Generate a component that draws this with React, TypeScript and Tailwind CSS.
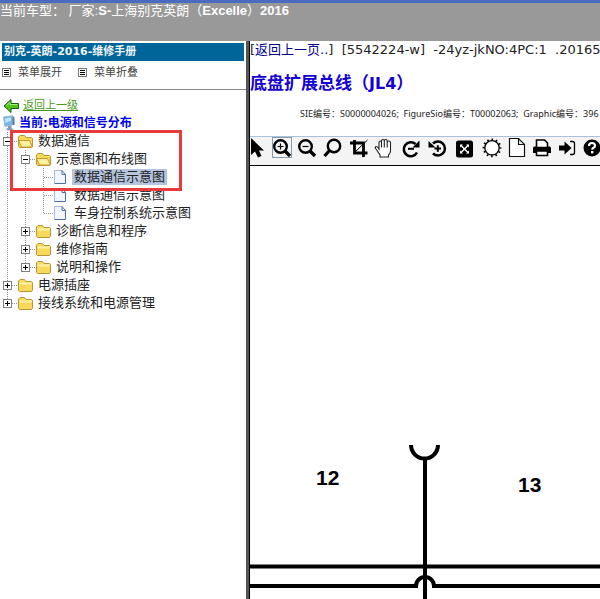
import { useState } from 'react';
import type { ReactNode } from 'react';
import clsx from 'clsx';

type Guide = 'line' | 'tee' | 'end';

interface TreeRow {
  id: string;
  label: string;
  guides: Guide[];
  toggle?: 'plus' | 'minus';
  icon: 'open' | 'closed' | 'file';
}

const rows: TreeRow[] = [
  { id: 'data', label: '数据通信', guides: ['tee'], toggle: 'minus', icon: 'open' },
  { id: 'views', label: '示意图和布线图', guides: ['line', 'tee'], toggle: 'minus', icon: 'open' },
  { id: 'view-1', label: '数据通信示意图', guides: ['line', 'line', 'tee'], icon: 'file' },
  { id: 'view-2', label: '数据通信示意图', guides: ['line', 'line', 'tee'], icon: 'file' },
  { id: 'view-3', label: '车身控制系统示意图', guides: ['line', 'line', 'end'], icon: 'file' },
  { id: 'diag', label: '诊断信息和程序', guides: ['line', 'tee'], toggle: 'plus', icon: 'closed' },
  { id: 'repair', label: '维修指南', guides: ['line', 'tee'], toggle: 'plus', icon: 'closed' },
  { id: 'desc', label: '说明和操作', guides: ['line', 'end'], toggle: 'plus', icon: 'closed' },
  { id: 'outlet', label: '电源插座', guides: ['tee'], toggle: 'plus', icon: 'closed' },
  { id: 'wiring', label: '接线系统和电源管理', guides: ['end'], toggle: 'plus', icon: 'closed' },
];

function GuideCell({ kind, toggle }: { kind: Guide; toggle?: 'plus' | 'minus' }) {
  const svg = (
    <svg width="18" height="18" className="block" shapeRendering="crispEdges" aria-hidden="true">
      <g stroke="#909090" strokeDasharray="1 1">
        <path d={kind === 'end' ? 'M7.5 0V9' : 'M7.5 0V18'} />
        {kind !== 'line' && <path d="M8 9.5H18" />}
      </g>
      {toggle && (
        <>
          <rect x="3.5" y="5.5" width="8" height="8" fill="#fff" stroke="#808080" />
          <path d={toggle === 'plus' ? 'M5 9.5H10M7.5 7V12' : 'M5 9.5H10'} stroke="#000" />
        </>
      )}
    </svg>
  );
  if (!toggle) return <span className="shrink-0">{svg}</span>;
  return (
    <button type="button" aria-label={toggle === 'plus' ? '展开' : '折叠'} className="shrink-0">
      {svg}
    </button>
  );
}

function NodeIcon({ kind }: { kind: TreeRow['icon'] }) {
  if (kind === 'file') {
    return (
      <svg width="16" height="18" className="shrink-0" aria-hidden="true">
        <path d="M1 3H8L11.500 6.500V15.500H1Z" fill="#f2f7ff" />
        <path d="M.5 15.500V2.500H8" fill="none" stroke="#a9bbdc" />
        <path d="M8 2.500V6.500H11.500V15.500H.5" fill="none" stroke="#4f6ea8" />
        <path d="M8 2.500L11.500 6.500" stroke="#4f6ea8" />
      </svg>
    );
  }
  return (
    <svg width="16" height="18" className="shrink-0" aria-hidden="true">
      <path d="M.5 14.500V5L2 3.500H6.500L8 5.500H13.500L14.500 6.500V14L13.500 15.500H1.500Z" fill="#f9d95c" stroke="#b9953a" />
      {kind === 'open' ? (
        <path d="M3.500 15L.5 8.500H11.500L14.500 15Z" fill="#fdf0a0" stroke="#c89a22" />
      ) : (
        <path d="M1.500 7.500H13.500" stroke="#fff2a8" strokeWidth="2" />
      )}
    </svg>
  );
}

function ListIcon() {
  return (
    <svg width="10" height="10" shapeRendering="crispEdges" aria-hidden="true">
      <rect x=".5" y=".5" width="8" height="8" fill="#fff" stroke="#777" />
      <path d="M2 2.500H7M2 4.500H7M2 6.500H7" stroke="#000" />
    </svg>
  );
}

const tools: { name: string; art: ReactNode }[] = [
  {
    name: '选择',
    art: <path d="M1 0V17L5 13.500L8 19.500L11.500 18L9 12.500H14Z" fill="#000" />,
  },
  {
    name: '放大',
    art: (
      <g fill="none" stroke="#000">
        <circle cx="8.500" cy="8.500" r="6.300" strokeWidth="2.400" />
        <path d="M13 13L18 18" strokeWidth="3.400" />
        <path d="M5.500 8.500H11.500M8.500 5.500V11.500" strokeWidth="1.200" />
      </g>
    ),
  },
  {
    name: '缩小',
    art: (
      <g fill="none" stroke="#000">
        <circle cx="7.500" cy="8.500" r="6.300" strokeWidth="2.400" />
        <path d="M12 13L17 18" strokeWidth="3.400" />
        <path d="M4.500 8.500H10.500" strokeWidth="1.200" />
      </g>
    ),
  },
  {
    name: '查找',
    art: (
      <g fill="none" stroke="#000">
        <circle cx="10" cy="8" r="6.200" strokeWidth="2.400" />
        <path d="M5.500 12.500L.5 18" strokeWidth="3.200" />
      </g>
    ),
  },
  {
    name: '裁剪',
    art: (
      <g fill="none" stroke="#000">
        <path d="M4.500 2V15H17.500" strokeWidth="2.800" />
        <path d="M0 5H13.500V19" strokeWidth="2.800" />
        <path d="M5 14L17.500 2" strokeWidth="1" />
      </g>
    ),
  },
  {
    name: '平移',
    art: (
      <path
        d="M4 19V17L0 11Q-1.500 9 0 8.500Q1.500 8.300 3 11V4.500Q3 3 4.200 3T5.500 4.500V9.500V3Q5.500 1.500 7 1.500T8.300 3V9.500V3Q8.300 1.500 9.700 1.500T11.200 3V9.500V4.500Q11.200 3 12.800 3T14.500 4.500V13Q14.500 15.500 12.500 17V19Z"
        fill="#fff"
        stroke="#222"
        strokeWidth="1.100"
      />
    ),
  },
  {
    name: '顺时针旋转',
    art: (
      <g fill="none" stroke="#000">
        <path d="M13.500 6A7 7 0 1 0 15 14.500" strokeWidth="2.600" />
        <path d="M17.500 2.500V9.500H10.500Z" fill="#000" stroke="none" />
        <path d="M6 10.800H12" strokeWidth="2" />
      </g>
    ),
  },
  {
    name: '逆时针旋转',
    art: (
      <g fill="none" stroke="#000">
        <path d="M5 5.500A7 7 0 1 1 5 15.500" strokeWidth="2.500" />
        <path d="M.5 3V9.500H7.500Z" fill="#000" stroke="none" />
        <path d="M6.500 10.500H13M9.800 7.300V13.700" strokeWidth="2" />
      </g>
    ),
  },
  {
    name: '适合窗口',
    art: (
      <g>
        <rect x="2" y="2.500" width="17" height="17" rx="2.500" fill="#000" />
        <path d="M6 6.500H9L8 7.500L10.500 10L13 7.500L12 6.500H15V9.500L14 8.500L11.500 11L14 13.500L15 12.500V15.500H12L13 14.500L10.500 12L8 14.500L9 15.500H6V12.500L7 13.500L9.500 11L7 8.500L6 9.500Z" fill="#fff" />
      </g>
    ),
  },
  {
    name: '亮度',
    art: (
      <g fill="none" stroke="#000">
        <circle cx="12" cy="9.800" r="8.400" strokeWidth="2" strokeDasharray="1.600 2.798" strokeDashoffset=".8" />
        <circle cx="12" cy="9.800" r="7.200" strokeWidth="1.300" fill="#fff" />
      </g>
    ),
  },
  {
    name: '新页面',
    art: <path d="M3.500 .5H12.500L18.500 6.500V18.500H3.500ZM12.500 .5V6.500H18.500" fill="#fff" stroke="#111" strokeWidth="1.200" />,
  },
  {
    name: '打印',
    art: (
      <g>
        <path d="M1 10Q1 8.500 2.500 8.500H17.500Q19 8.500 19 10V15H1Z" fill="#000" />
        <path d="M4.500 9.500V2H12.500L15.500 5V9.500Z" fill="#fff" stroke="#000" strokeWidth="1.600" />
        <path d="M4.500 13H15.500V17.500H4.500Z" fill="#fff" stroke="#000" strokeWidth="1.600" />
      </g>
    ),
  },
  {
    name: '退出',
    art: (
      <g>
        <path d="M1 7.500H6.500V3.500L13.500 10L6.500 16.500V12.500H1Z" fill="#000" />
        <path d="M12 3.500H14.500Q16.500 3.500 16.500 5.500V14.500Q16.500 16.500 14.500 16.500H12" fill="none" stroke="#000" strokeWidth="1.300" />
      </g>
    ),
  },
  {
    name: '帮助',
    art: (
      <g>
        <circle cx="8" cy="10" r="8.500" fill="#000" />
        <path d="M5 8Q5 5 8 5T11 7.800Q11 9 9.500 9.800Q8.200 10.500 8.200 11.800" fill="none" stroke="#fff" strokeWidth="2.200" />
        <rect x="7" y="13" width="2.400" height="2.400" fill="#fff" />
      </g>
    ),
  },
];

function Sidebar() {
  const [selected, setSelected] = useState('view-1');

  return (
    <aside className="w-[246px] shrink-0 bg-white font-['DejaVu_Sans','Noto_Sans_CJK_SC',sans-serif]">
      <div className="px-0.5 pt-0.5">
        <h1 className="h-[18px] bg-[#006699] pl-0.5 text-[11px] leading-[18px] font-bold whitespace-nowrap text-[#eef4f8]">
          别克-英朗-2016-维修手册
        </h1>
      </div>
      <div className="flex h-[29px] items-center gap-4 border-b border-[#888] pb-1 pl-0.5 text-[11px] leading-4 text-[#444]">
        <button type="button" className="flex items-center gap-1.5">
          <ListIcon />
          菜单展开
        </button>
        <button type="button" className="flex items-center gap-1.5">
          <ListIcon />
          菜单折叠
        </button>
      </div>

      <div className="flex h-6 items-end gap-1 pl-[3px] text-[11px] leading-4">
        <svg width="16" height="16" aria-hidden="true">
          <path d="M1 8L8 1.500V5.500H15.500V10.500H8V14.500Z" fill="#4fc51c" stroke="#14600a" />
          <path d="M3.500 7.500L7 4.500V6.500H14.500" fill="none" stroke="#a8ec7c" />
        </svg>
        <a href="#up" className="text-[#4a9a1a] underline">返回上一级</a>
      </div>
      <div className="flex h-[18px] items-center gap-0.5 pl-0.5 text-xs leading-[18px] font-bold whitespace-nowrap text-[#0000e8]">
        <svg width="15" height="16" aria-hidden="true">
          <path d="M1.500 2L10.500 .8V9.800L3 11.500Z" fill="#74b8f0" stroke="#9ab4d0" />
          <path d="M3 3.500L9 2.500V5.500L3.500 8Z" fill="#c4e6ff" />
          <path d="M10.500 1L12.500 2.500V10L10.500 10Z" fill="#5478a8" />
          <path d="M6 11L9.500 10.500V13L12 14.500L6 15.500L3.500 14L6 13Z" fill="#8798b0" />
        </svg>
        当前:电源和信号分布
      </div>

      <div className="relative">
        <ul className="text-[13px] leading-4 text-[#222]">
          {rows.map((row) => (
            <li key={row.id} className="flex h-[18px] items-center whitespace-nowrap">
              {row.guides.map((kind, i) => (
                <GuideCell key={i} kind={kind} toggle={i === row.guides.length - 1 ? row.toggle : undefined} />
              ))}
              <NodeIcon kind={row.icon} />
              <button
                type="button"
                onClick={() => setSelected(row.id)}
                className={clsx('ml-0.5 px-0.5', selected === row.id && 'bg-[#b5c5de]')}
              >
                {row.label}
              </button>
            </li>
          ))}
        </ul>
        <div className="pointer-events-none absolute -top-0.5 left-2.5 h-[61px] w-[172px] border-3 border-[#e93a3e]" />
      </div>
    </aside>
  );
}

function Diagram() {
  return (
    <svg className="block h-[433px] w-full" role="img" aria-label="底盘扩展总线">
      <g fill="none" stroke="#000" strokeWidth="4">
        <path d="M161 279A13.500 13.500 0 0 0 188 279" />
        <path d="M175 293V433" />
        <line x1="0" y1="400.500" x2="100%" y2="400.500" />
        <path d="M0 420H166A9 9 0 0 1 184 420H190" />
        <line x1="190" y1="420" x2="100%" y2="420" />
      </g>
      <g className="font-['Liberation_Sans',sans-serif] text-[21px] font-bold">
        <text x="66" y="319">12</text>
        <text x="268" y="326">13</text>
      </g>
    </svg>
  );
}

function Viewer() {
  return (
    <main className="min-w-0 flex-1 overflow-hidden border-l border-black bg-white font-['DejaVu_Sans','Noto_Sans_CJK_SC',sans-serif] whitespace-nowrap">
      <p className="h-[18px] text-[13px] leading-[18px] text-[#222]">
        [<a href="#back" className="text-[#00008b]">返回上一页..</a>]&nbsp; [5542224-w]&nbsp; -24yz-jkNO:4PC:1&nbsp; .20165
      </p>
      <h2 className="mt-3 h-6 text-[17px] leading-6 font-bold text-[#1400d2]">
        底盘扩展总线（<span className="text-base leading-6">JL4</span>）
      </h2>
      <p className="mt-[13px] pl-[50px] font-['Noto_Sans','Noto_Sans_CJK_SC',sans-serif] text-[9px] leading-3 text-[#222]">
        SIE编号：S0000004026;&nbsp; FigureSio编号：T00002063;&nbsp; Graphic编号：396
      </p>
      <div className="mt-4 flex h-[30px] gap-1.5 border-t border-b border-t-[#a9c1d9] border-b-black bg-[#f4f4f4]">
        {tools.map((tool, i) => (
          <button
            key={tool.name}
            type="button"
            aria-label={tool.name}
            className={clsx(
              'flex h-[21px] shrink-0 items-center justify-center',
              i === 0 ? 'w-4' : 'w-5',
              i === 1 && 'outline outline-[#8a9aa8] -outline-offset-1',
            )}
          >
            <svg width={i === 0 ? 16 : 20} height="20" className="overflow-visible" aria-hidden="true">
              {tool.art}
            </svg>
          </button>
        ))}
      </div>
      <Diagram />
    </main>
  );
}

export default function App() {
  return (
    <div className="flex min-h-screen flex-col overflow-hidden bg-white">
      <header className="h-[41px] border-t-3 border-[#4a6bc0] bg-[#999] font-['Liberation_Sans','Noto_Sans_CJK_SC',sans-serif] text-[13px] leading-4 whitespace-nowrap text-white">
        当前车型：&nbsp;厂家:<b>S-</b>上海别克英朗（<b>Excelle</b>）<b>2016</b>
      </header>
      <div className="flex flex-1">
        <Sidebar />
        <div className="w-[3px] shrink-0 bg-[#555]" />
        <Viewer />
      </div>
    </div>
  );
}
